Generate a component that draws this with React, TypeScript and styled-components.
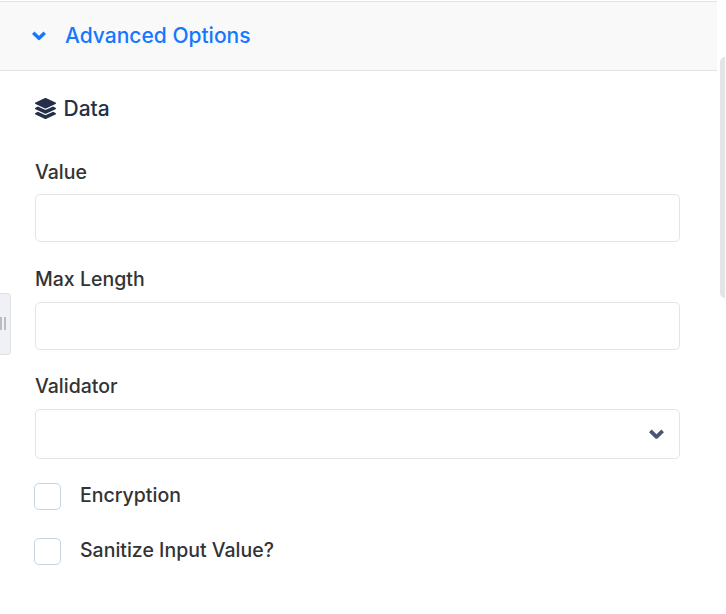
import React from "react";
import styled, { createGlobalStyle } from "styled-components";
import { FaLayerGroup } from "react-icons/fa";

const GlobalStyle = createGlobalStyle`
  * { box-sizing: border-box; }
  body { margin: 0; background: #fff; font-family: Inter, "Liberation Sans", sans-serif; overflow: hidden; }
`;

const Page = styled.div`
  position: relative;
  height: 614px;
  width: 726px;
  padding-top: 1px;
`;

const Header = styled.button`
  display: flex;
  align-items: center;
  width: 717px;
  height: 70px;
  padding: 0 0 0 31.5px;
  gap: 19.5px;
  border: solid #e2e2e2;
  border-width: 1px 0;
  background: #f9f9f9;
  color: #1677ff;
  font: 500 21px/30px Inter, sans-serif;
`;

const Panel = styled.section`
  width: 680px;
  padding: 22px 0 0 35px;
`;

const Title = styled.h2`
  display: flex;
  align-items: center;
  gap: 7.5px;
  margin: 0 0 33px;
  height: 30px;
  color: #252f4a;
  font-size: 21px;
  font-weight: 500;
`;

const Field = styled.label<{ $gap: number }>`
  display: block;
  margin-bottom: ${(p) => p.$gap}px;
`;

const Label = styled.span<{ $height?: number }>`
  display: block;
  height: ${(p) => p.$height ?? 39}px;
  line-height: 30px;
  padding-top: 1px;
  color: #333;
  font-size: 19.5px;
  font-weight: 500;
`;

const Input = styled.input`
  display: block;
  width: 645px;
  height: 48px;
  border: 1px solid #e4e4e4;
  border-radius: 5px;
  background: #fff;
  outline: none;
`;

const Select = styled.div`
  display: flex;
  align-items: center;
  justify-content: flex-end;
  width: 645px;
  height: 50px;
  padding: 0 15px;
  border: 1px solid #e4e4e4;
  border-radius: 5px;
  color: #4b5675;
`;

const CheckRow = styled.label`
  display: flex;
  align-items: center;
  gap: 19px;
  height: 27px;
  margin: 0 0 28px -1px;
  color: #333;
  font-size: 19.5px;
  font-weight: 500;
`;

const Box = styled.input`
  appearance: none;
  width: 27px;
  height: 27px;
  margin: 0;
  border: 1px solid #c8d3e3;
  border-radius: 5px;
`;

const CheckText = styled.span`
  line-height: 24px;
  padding-bottom: 3px;
`;

const ResizeHandle = styled.div`
  position: absolute;
  left: 0;
  top: 293px;
  width: 11px;
  height: 62px;
  display: flex;
  align-items: center;
  gap: 2px;
  padding-bottom: 2px;
  border: 1px solid #e2e2e2;
  border-left: 0;
  border-radius: 0 4px 4px 0;
  background: #f0f1f6;
`;

const Grip = styled.i`
  width: 2px;
  height: 13px;
  background: #bbbcc0;
`;

const ScrollThumb = styled.div`
  position: absolute;
  left: 720px;
  top: 57px;
  width: 5px;
  height: 241px;
  border-radius: 5px 0 0 5px;
  background: #e4e4e4;
`;

const Chevron = ({ width }: { width: number }) => (
  <svg width={width} height={(width * 10) / 14} viewBox="0 0 14 10" fill="none">
    <path
      d="M2.5 3 7 7.3 11.5 3"
      stroke="currentColor"
      strokeWidth="3.5"
      strokeLinecap="square"
      strokeLinejoin="round"
    />
  </svg>
);

export default function App() {
  return (
    <>
      <GlobalStyle />
      <Page>
        <Header>
          <Chevron width={14} />
          Advanced Options
        </Header>
        <Panel>
          <Title>
            <FaLayerGroup size={21} />
            Data
          </Title>
          <Field $gap={21}>
            <Label $height={38}>Value</Label>
            <Input />
          </Field>
          <Field $gap={20}>
            <Label>Max Length</Label>
            <Input />
          </Field>
          <Field $gap={24}>
            <Label>Validator</Label>
            <Select>
              <Chevron width={15} />
            </Select>
          </Field>
          <CheckRow>
            <Box type="checkbox" />
            <CheckText>Encryption</CheckText>
          </CheckRow>
          <CheckRow>
            <Box type="checkbox" />
            <CheckText>Sanitize Input Value?</CheckText>
          </CheckRow>
        </Panel>
        <ResizeHandle>
          <Grip />
          <Grip />
        </ResizeHandle>
        <ScrollThumb />
      </Page>
    </>
  );
}
